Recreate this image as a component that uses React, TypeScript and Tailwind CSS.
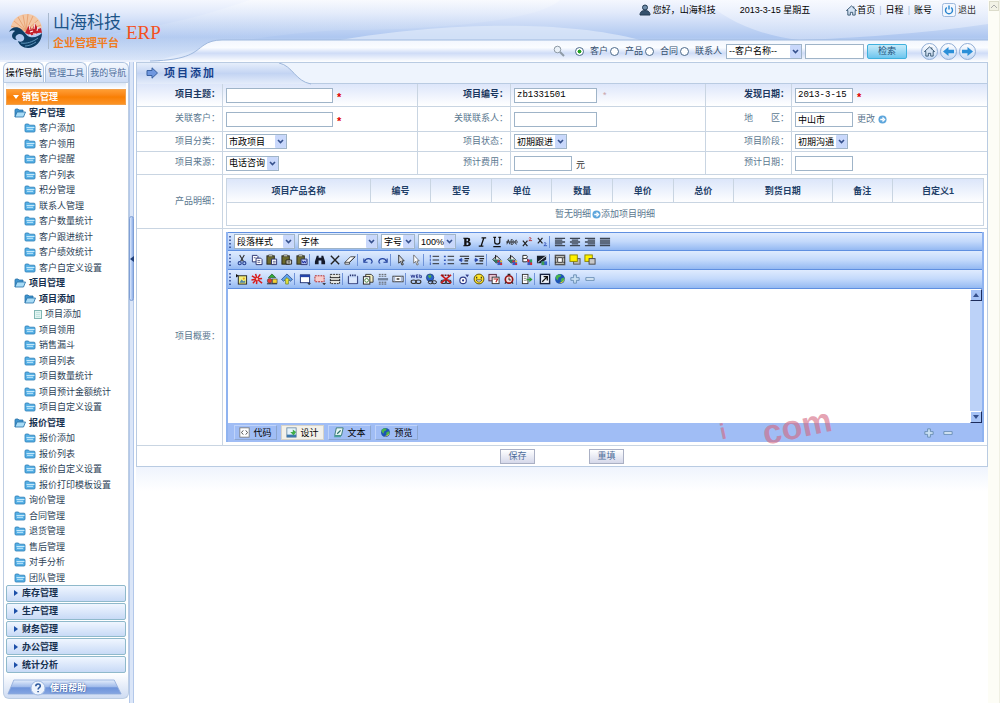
import { useState, type ReactNode } from 'react'

interface TreeNode { text: string; level: number; open?: boolean; leaf?: boolean }

const TREE: TreeNode[] = [
  { text: '客户管理', level: 0, open: true },
  { text: '客户添加', level: 1 },
  { text: '客户领用', level: 1 },
  { text: '客户提醒', level: 1 },
  { text: '客户列表', level: 1 },
  { text: '积分管理', level: 1 },
  { text: '联系人管理', level: 1 },
  { text: '客户数量统计', level: 1 },
  { text: '客户跟进统计', level: 1 },
  { text: '客户绩效统计', level: 1 },
  { text: '客户自定义设置', level: 1 },
  { text: '项目管理', level: 0, open: true },
  { text: '项目添加', level: 1, open: true },
  { text: '项目添加', level: 2, leaf: true },
  { text: '项目领用', level: 1 },
  { text: '销售漏斗', level: 1 },
  { text: '项目列表', level: 1 },
  { text: '项目数量统计', level: 1 },
  { text: '项目预计金额统计', level: 1 },
  { text: '项目自定义设置', level: 1 },
  { text: '报价管理', level: 0, open: true },
  { text: '报价添加', level: 1 },
  { text: '报价列表', level: 1 },
  { text: '报价自定义设置', level: 1 },
  { text: '报价打印模板设置', level: 1 },
  { text: '询价管理', level: 0 },
  { text: '合同管理', level: 0 },
  { text: '退货管理', level: 0 },
  { text: '售后管理', level: 0 },
  { text: '对手分析', level: 0 },
  { text: '团队管理', level: 0 },
]

const INDENT = ['pl-2', 'pl-[18px]', 'pl-7']
const GROUPS = ['库存管理', '生产管理', '财务管理', '办公管理', '统计分析']
const SEARCH_TYPES = ['客户', '产品', '合同', '联系人']

const DETAIL_COLS = [
  { name: '项目产品名称', width: 'w-[19%]' },
  { name: '编号', width: 'w-[8%]' },
  { name: '型号', width: 'w-[8%]' },
  { name: '单位', width: 'w-[8%]' },
  { name: '数量', width: 'w-[8%]' },
  { name: '单价', width: 'w-[8%]' },
  { name: '总价', width: 'w-[8%]' },
  { name: '到货日期', width: 'w-[13%]' },
  { name: '备注', width: 'w-[8%]' },
  { name: '自定义1', width: 'w-[12%]' },
]

/* ---------- toolbar drawings, all on a 13x13 grid ---------- */

const clipboard = (
  <>
    <rect x="1" y="2" width="8" height="9" fill="#6b6a2c" stroke="#26261a" />
    <rect x="3" y="1" width="4" height="2" fill="#d8d8c0" stroke="#333" strokeWidth=".6" />
  </>
)
const bucket = (
  <>
    <path d="M2 6l4-4 4 4-4 4z" fill="#f4f4f4" stroke="#111" />
    <path d="M5 1v5" stroke="#111" />
    <path d="M2 6h7l-3 4z" fill="#2c7a5c" />
    <path d="M7 7h5v5H7z" fill="#3b58c4" />
    <path d="M7 7h2v2H7zM10 10h2v2h-2z" fill="#e02828" />
    <path d="M10 7h2v2h-2z" fill="#f3d22b" />
  </>
)
const chain = (
  <g fill="none" stroke="#333" strokeWidth="1.2">
    <ellipse cx="4" cy="9.5" rx="2.8" ry="1.9" />
    <ellipse cx="9" cy="9.5" rx="2.8" ry="1.9" />
  </g>
)

const ICONS: Record<string, ReactNode> = {
  cut: <><path d="M4 1l4 7M9 1L5 8" stroke="#333" strokeWidth="1.2" /><g fill="none" stroke="#27408f" strokeWidth="1.2"><circle cx="4" cy="10" r="1.7" /><circle cx="9" cy="10" r="1.7" /></g></>,
  copy: <g fill="#fff" stroke="#27306b"><path d="M1.500 1.500h5l1 1v6h-6z" /><path d="M5.500 4.500h5l1.500 1.500v5.500H5.500z" /><path d="M7 7h3M7 9h3M3 4h2" strokeWidth=".8" /></g>,
  paste: <>{clipboard}<path d="M6 5.500h5.500v6H6z" fill="#fff" stroke="#27306b" /><path d="M7.500 8h3M7.500 9.700h3" stroke="#27306b" strokeWidth=".7" /></>,
  pasteText: <>{clipboard}<path d="M5.500 6.500h6v4.500h-6z" fill="#e8e8d8" stroke="#222" /><path d="M7 8h3M7 9.500h3" stroke="#222" strokeWidth=".7" /></>,
  pasteWord: <>{clipboard}<path d="M5.500 5.500h6.500v6H5.500z" fill="#cbd6fb" stroke="#27306b" /><path d="M6.500 7l1.200 3L9 7.500l1 2.500 1.200-3" fill="none" stroke="#1c2fa0" /></>,
  find: <path d="M3 2h2v2h3V2h2l2 6v3H8V7H5v4H1V8z" fill="#151a2b" />,
  close: <path d="M2 2l9 9M11 2l-9 9" stroke="#222" strokeWidth="1.5" />,
  eraser: <path d="M1 9l6-6h5l-6 6v2H1zM1 9h5M6 9l6-6" fill="#fff" stroke="#333" strokeWidth=".9" />,
  undo: <path d="M3 8c1-4 7-4 8 0 0 1-.5 2-1.500 2M2 5v4h4" fill="none" stroke="#1f3f9c" strokeWidth="1.2" />,
  redo: <path d="M10 8c-1-4-7-4-8 0 0 1 .5 2 1.500 2M11 5v4H7" fill="none" stroke="#1f3f9c" strokeWidth="1.2" />,
  select: <path d="M4 1v9l2-2 1.500 4 1.500-.7L7.500 7.500H10z" fill="#ddd" stroke="#222" strokeWidth=".9" />,
  pointer: <path d="M4 1v9l2-2 1.500 4 1.500-.7L7.500 7.500H10z" fill="#fff" stroke="#666" strokeWidth=".9" />,
  ol: <><path d="M5 2.500h7M5 6.500h7M5 10.500h7" stroke="#222" /><path d="M2.500 1v3M2.500 5v3M2.500 9v3" stroke="#2a50b8" /></>,
  ul: <><path d="M5 2.500h7M5 6.500h7M5 10.500h7" stroke="#222" /><path d="M1 2h2v1.500H1zM1 6h2v1.500H1zM1 10h2v1.500H1z" fill="#2a50b8" /></>,
  outdent: <><path d="M2 2.500h10M7 5h5M7 7.500h4M3 10.500h8" stroke="#222" strokeWidth="1.2" /><path d="M1 6.500l3-2v4zM4 6.500h2" fill="#1b3ba5" stroke="#1b3ba5" strokeWidth=".6" /></>,
  indent: <><path d="M2 2.500h10M7 5h5M7 7.500h4M3 10.500h8" stroke="#222" strokeWidth="1.2" /><path d="M5.500 6.500l-3-2v4zM1 6.500h2" fill="#1b3ba5" stroke="#1b3ba5" strokeWidth=".6" /></>,
  fore: bucket,
  back: bucket,
  tableBg: <><path d="M2 1.500h4l1 1.500-1 1.500 1.500 2-1.500 2H2z" fill="#fff" stroke="#222" /><path d="M2 5h4" stroke="#222" /><path d="M7 6h5v6H7z" fill="#3b58c4" /><path d="M7 6h2v3H7zM10 9h2v3h-2z" fill="#e02828" /><path d="M10 6h2v3h-2z" fill="#2fae4e" /></>,
  image: <><path d="M1 2h10v4L5 10H1z" fill="#18202c" /><path d="M11 2L2 9" stroke="#dfe6ee" /><path d="M6 8h6v4H6z" fill="#3a63cf" /><path d="M6 8h3v4H6z" fill="#3b9b55" /></>,
  absolute: <><rect x="1.500" y="1.500" width="10" height="10" fill="#c9c9c0" stroke="#555" strokeWidth="1.500" /><rect x="4" y="4" width="5" height="5" fill="#fff" stroke="#333" /><path d="M1 4h2M10 4h2M1 9h2M10 9h2" stroke="#333" /></>,
  front: <><rect x="5" y="5" width="7" height="6" fill="#b9b9b9" stroke="#555" /><rect x="1" y="1" width="8" height="7" fill="#fff200" stroke="#8b8400" /></>,
  behind: <><rect x="1" y="1" width="8" height="7" fill="#fff200" stroke="#8b8400" /><rect x="5.500" y="5" width="6.500" height="6" fill="#c8c8c8" stroke="#444" /></>,
  picture: <><path d="M0 1l3 2-3 2z" fill="#111" /><rect x="2.500" y="3" width="9" height="9" fill="#f4ef7a" stroke="#222" /><circle cx="8.500" cy="6" r="1.200" fill="#e2a81d" /><path d="M4 10l2-3 2 2 2-1v2.500H4z" fill="#4d84a7" /></>,
  flash: <><g stroke="#d81c1c" strokeWidth="1.600"><path d="M6.500 6.500L1 3M6.500 6.500L5 1M6.500 6.500L10 1.500M6.500 6.500L12 6M6.500 6.500L12 11M6.500 6.500L6 12M6.500 6.500L2 11M6.500 6.500L.5 7.500" /></g><circle cx="6.500" cy="6.500" r="1.300" fill="#f7b4a8" /></>,
  media: <><path d="M6.500 1l4 4h-8z" fill="#31ab37" stroke="#174f1c" strokeWidth=".7" /><circle cx="4" cy="8.500" r="2.600" fill="#e33b2f" stroke="#333" strokeWidth=".6" /><rect x="7" y="6.500" width="5" height="4.500" fill="#f1d034" stroke="#333" strokeWidth=".6" /><path d="M1 11.700h11" stroke="#222" /></>,
  file: <><path d="M6.500 1L12.500 7 10 9 6.500 5.500 3 9 .5 7z" fill="#5fa1e8" stroke="#27468c" strokeWidth=".8" /><path d="M6.500 5l3 3H8v4H5V8H3.500z" fill="#e8e23c" stroke="#5c7820" strokeWidth=".7" /></>,
  table: <><rect x="1.500" y="2" width="10" height="8.500" fill="#fff" stroke="#1e2f70" /><path d="M1 2h11v2.500H1z" fill="#2443a8" /><path d="M9 11h4l-2 2z" fill="#111" /></>,
  cell: <><rect x="1" y="3" width="10" height="6.500" fill="#f6cccc" stroke="#b02222" strokeDasharray="2 1" /><path d="M9 11h4l-2 2z" fill="#111" /></>,
  border: <><rect x="1.500" y="1.500" width="10" height="10" fill="#e6e6e0" stroke="#222" strokeDasharray="2 1" /><path d="M1 5h11M1 8h11" stroke="#222" /></>,
  fieldset: <><path d="M2 3.500H1.500v8h10v-8H11" fill="none" stroke="#26306c" /><path d="M3 2.500h7" stroke="#26306c" strokeWidth="2" strokeDasharray="1.500 1" /><rect x="2.500" y="5" width="8" height="6" fill="#dbe7fb" /></>,
  page: <><path d="M4 1.500h6l2 2V10H4z" fill="#f4f0c4" stroke="#333" /><rect x="1.500" y="4" width="7" height="8" fill="#fff" stroke="#222" /><circle cx="5" cy="8" r="2" fill="none" stroke="#3c7c37" /></>,
  hr: <><path d="M2 1.500h9M2 3.500h9M2 10h9M2 12h9" stroke="#555" strokeDasharray="2 1" /><path d="M1 5.500h11v2.500H1z" fill="#71839c" /></>,
  marquee: <><rect x="1" y="3.500" width="11" height="6" fill="#fff" stroke="#333" /><path d="M1.500 4h2v5h-2zM9.500 4h2v5h-2z" fill="#a9bad8" /><path d="M5 6.500h3" stroke="#222" strokeWidth="1.500" /></>,
  link: <><path d="M1 2l1 3 1.200-3 1.200 3 1-3M7 2v3h2M7 3.500h2M7 2h2M10.500 1.500v3.500h2v-2h-2" fill="none" stroke="#23328a" strokeWidth=".9" />{chain}</>,
  globe: <><circle cx="5.500" cy="5" r="4" fill="#2a62c9" stroke="#12306b" strokeWidth=".7" /><path d="M3 3l3-1 1 2-2 2z" fill="#4fb34a" /><g fill="none" stroke="#222"><ellipse cx="6" cy="10" rx="2.500" ry="1.700" /><ellipse cx="10" cy="10" rx="2.500" ry="1.700" /></g></>,
  unlink: <>{chain}<path d="M1 2l11 9M12 2L1 11" stroke="#c81818" strokeWidth="1.700" /><path d="M2 2.500h9" stroke="#7a1515" strokeWidth="1.500" strokeDasharray="2 1" /></>,
  anchor: <><circle cx="5.500" cy="8" r="3.500" fill="#fff" stroke="#2f3a87" strokeWidth="1.200" /><circle cx="5.500" cy="8" r="1.200" fill="#2f3a87" /><path d="M8 1.500l4 .5-2 2.500z" fill="#2f3a87" /></>,
  smile: <><circle cx="6.500" cy="6.500" r="5.300" fill="#ffe52e" stroke="#5a4d00" /><path d="M4 4v2M9 4v2" stroke="#222" strokeWidth="1.200" /><path d="M3.500 7.500c1 3 5 3 6 0z" fill="#fff" stroke="#222" strokeWidth=".8" /></>,
  date: <><rect x="1" y="1.500" width="8" height="7" fill="#e9c6d3" stroke="#52203a" /><rect x="4.500" y="4.500" width="7.500" height="7" fill="#fff" stroke="#333" /><path d="M6 6.500h4.500L8.500 10" fill="none" stroke="#b01f1f" strokeWidth="1.200" /></>,
  time: <><circle cx="6.500" cy="7" r="4" fill="#f3dede" stroke="#941313" strokeWidth="1.800" /><path d="M6.500 5v2.500h2" fill="none" stroke="#222" /><path d="M5 1.500h3M2 11.500l1.500-1.500M11 11.500L9.500 10" stroke="#222" strokeWidth="1.200" /></>,
  template: <><rect x="1.500" y="1.500" width="6" height="10" fill="#fff" stroke="#333" /><path d="M3 4h3M3 6h3M3 8h3" stroke="#777" strokeWidth=".8" /><path d="M6 6.500h3V4l3.500 3L9 10V7.800H6z" fill="#2f9d35" /></>,
  full: <><rect x="1.500" y="1.500" width="10" height="10" fill="#eef3fb" stroke="#16213d" strokeWidth="1.500" /><path d="M3.500 9.500l5-5M5 4h4v4" fill="none" stroke="#111" strokeWidth="1.400" /></>,
  earth: <><circle cx="6.500" cy="6.500" r="5.300" fill="#1d54b5" /><path d="M3 2.500c2-1.500 4-1 5-.5l-1 2-2 1-1 3-2-2c-.5-1.500 0-2.500 1-3.500zM8 6l3-1c.5 2 0 4-1.500 5L7 9z" fill="#48b44c" /><path d="M5 11c4 1 6-2 7-5-1 2-3 4-7 5z" fill="#f5d33b" /></>,
  plus: <path d="M5 2h3v3h3v3H8v3H5V8H2V5h3z" fill="#c9e0f3" stroke="#5f86ad" strokeWidth=".9" />,
  minus: <path d="M2 5h9v3H2z" fill="#dbeaf7" stroke="#5f86ad" strokeWidth=".9" />,
  bold: <path fillRule="evenodd" d="M2.500 2H7.500Q10.300 2.200 10 4.200 9.800 5.700 8.500 6.200 11 6.600 10.700 9q-.4 2-3.200 2h-5v-1h1V3h-1zM6 3.200v2.500h.8q1-.2 1-1.300T6.800 3.200zM6 7v2.800h.9q1.300-.1 1.300-1.400T6.900 7z" fill="#111" />,
  italic: <path d="M6 2h5M3 11h5M8.500 2l-3 9" stroke="#111" strokeWidth="1.500" />,
  underline: <path d="M2.500 1.500h3M8 1.500h3M4 1.500v5c0 3 5.500 3 5.500 0v-5M2.500 11.500h8" fill="none" stroke="#111" strokeWidth="1.300" />,
  strike: <path d="M1 9l1.500-5L4 9M5.500 4v5h1.800l.7-1.200-.7-1.300.7-1.300L7 4zM12 5c-3-2-3 5 0 3.500M0 6.500h13" fill="none" stroke="#222" strokeWidth=".9" />,
  sup: <><path d="M2 5l5 6M7 5l-5 6" stroke="#222" strokeWidth="1.300" /><path d="M8.500 2.500c1-1.500 3-.5 2 .8L8.500 5H12" fill="none" stroke="#b01f1f" strokeWidth=".9" /></>,
  sub: <><path d="M2 2l5 6M7 2l-5 6" stroke="#222" strokeWidth="1.300" /><path d="M8.500 8c1-1.500 3-.5 2 .8L8.500 10.500H12" fill="none" stroke="#2546b0" strokeWidth=".9" /></>,
  left: <path d="M1 2.500h11M1 4.500h8M1 6.500h11M1 8.500h8M1 10.500h11" stroke="#3d4654" strokeWidth="1.400" />,
  center: <path d="M1 2.500h11M3 4.500h7M1 6.500h11M3 8.500h7M1 10.500h11" stroke="#3d4654" strokeWidth="1.400" />,
  right: <path d="M1 2.500h11M4 4.500h8M1 6.500h11M4 8.500h8M1 10.500h11" stroke="#3d4654" strokeWidth="1.400" />,
  justify: <path d="M1 2.500h11M1 4.500h11M1 6.500h11M1 8.500h11M1 10.500h11" stroke="#3d4654" strokeWidth="1.400" />,
}

// '|' is a separator
const ROW_1 = ['bold', 'italic', 'underline', 'strike', 'sup', 'sub', '|', 'left', 'center', 'right', 'justify']
const ROW_2 = ['cut', 'copy', 'paste', 'pasteText', 'pasteWord', '|', 'find', 'close', 'eraser', '|', 'undo', 'redo', '|', 'select', 'pointer', '|', 'ol', 'ul', 'outdent', 'indent', '|', 'fore', 'back', 'tableBg', 'image', '|', 'absolute', 'front', 'behind']
const ROW_3 = ['picture', 'flash', 'media', 'file', '|', 'table', 'cell', 'border', '|', 'fieldset', 'page', 'hr', 'marquee', '|', 'link', 'globe', 'unlink', '|', 'anchor', 'smile', 'date', 'time', '|', 'template', '|', 'full', 'earth', 'plus', 'minus']

function Tools({ items }: { items: string[] }) {
  return (
    <>
      {items.map((name, i) =>
        name === '|' ? (
          <span key={i} className="h-3 w-[3px] shrink-0 border-l border-[#6f93d8]" />
        ) : (
          <button key={i} type="button" aria-label={name} className="flex w-[15px] shrink-0 justify-center">
            <svg viewBox="0 0 13 13" className="size-3">{ICONS[name]}</svg>
          </button>
        )
      )}
    </>
  )
}

function Grip() {
  return (
    <svg viewBox="0 0 6 12" className="h-3 w-1.5 shrink-0">
      <path d="M2 0v12" stroke="#27408f" strokeWidth="1.500" strokeDasharray="1.500 2" />
    </svg>
  )
}

function Select({ label, value, className }: { label: string; value: string; className: string }) {
  return (
    <span className={`relative inline-block h-[15px] ${className}`}>
      <select
        aria-label={label}
        defaultValue={value}
        className="block size-full appearance-none border border-[#9fb4c8] bg-white pl-0.5 text-[9px] leading-[12px] text-black outline-none"
      >
        <option>{value}</option>
      </select>
      <svg viewBox="0 0 11 13" className="pointer-events-none absolute top-px right-px h-[13px] w-[11px]">
        <rect width="11" height="13" rx="1" fill="#c9d8fb" />
        <path d="M3 5l2.500 2.500L8 5" fill="none" stroke="#35508c" strokeWidth="1.600" />
      </svg>
    </span>
  )
}

function FolderIcon({ open }: { open?: boolean }) {
  return (
    <svg viewBox="0 0 12 10" className="h-[10px] w-3 shrink-0">
      {open ? (
        <>
          <path d="M1 9V2q0-1 1-1h2l1 1h4v2" fill="#3f95cf" stroke="#256fa6" strokeWidth=".8" />
          <path d="M1 9l2-5h8.500L9.500 9z" fill="#a9dcf7" stroke="#256fa6" strokeWidth=".8" />
        </>
      ) : (
        <>
          <path d="M1 8V2q0-1 1-1h2.500l1 1.200H10q1 0 1 1V8q0 1-1 1H2Q1 9 1 8z" fill="#58b1e6" stroke="#2a7cb5" strokeWidth=".8" />
          <path d="M2.500 4.500h8M3 6.300h6" stroke="#c5eafc" strokeWidth="1" />
        </>
      )}
    </svg>
  )
}

function HomeIcon() {
  return (
    <svg viewBox="0 0 12 12" className="size-[11px]">
      <path d="M6 1l5.500 5H10v5H7.300V8H4.700v3H2V6H.5z" fill="#d5e4f5" stroke="#33536f" strokeWidth="1" />
      <path d="M8.500 1.500v2" stroke="#33536f" />
    </svg>
  )
}

function RoundButton({ label, children }: { label: string; children: ReactNode }) {
  return (
    <button type="button" aria-label={label} className="flex size-[17px] items-center justify-center rounded-full border border-[#8fadd6] bg-linear-to-b from-white to-[#c4d9f5]">
      {children}
    </button>
  )
}

function LinkArrow() {
  return (
    <svg viewBox="0 0 10 10" className="size-[9px]">
      <circle cx="5" cy="5" r="4.500" fill="#5ea6dc" />
      <path d="M2.500 5H6M5 2.800L7.300 5 5 7.200" fill="none" stroke="#fff" strokeWidth="1.500" />
    </svg>
  )
}

function Logo() {
  return (
    <svg viewBox="0 0 36 36" className="size-9 shrink-0">
      <path d="M3 15C4 6 11 1 19 1c8 0 14 6 15 14-4-2-8 2-12 4-6 2-14-6-19-4z" fill="#f3c7a4" />
      <g stroke="#e69a68" strokeWidth=".8">
        <path d="M18 18L6 8M18 18L10 4M18 18L15 2M18 18L20 1M18 18L25 3M18 18L30 7M18 18L33 12M18 18L3 13" />
      </g>
      <path d="M17 20l4-8 3 5 3-7 3 6 3-1 1 5c-5-1-8 3-12 2z" fill="#c3202c" />
      <path d="M21 12l1 5M27 10l-1 6M30 14l-1 4" stroke="#fff" strokeWidth=".9" />
      <path d="M1 19c2-5 8-6 12-3 4 3 5 7 9 8 5 1 9-1 12-4 0 8-6 15-14 15-5 0-9-3-10-7 4 2 7-1 6-4-1-3-5-4-7-2-2 1-2 4 0 5-3 0-5-2-5-4 0-3 2-4 3-5-2-1-5 0-6 1z" fill="#0f3f66" />
      <path d="M13 30c5 1 12-1 17-5M17 33c4 0 8-2 11-4" fill="none" stroke="#5c93ba" strokeWidth="1" />
      <path d="M21 22h2M25 21h3M22 19l3-1" stroke="#fff" strokeWidth="1.200" />
    </svg>
  )
}

function Header() {
  const [type, setType] = useState('客户')
  return (
    <header className="relative flex h-[62px] shrink-0">
      <svg viewBox="0 0 988 62" preserveAspectRatio="none" className="absolute inset-0 size-full">
        <defs>
          <linearGradient id="sky" x1="0" y1="0" x2="0" y2="1">
            <stop offset="0" stopColor="#f4f7fe" />
            <stop offset=".2" stopColor="#e2eafb" />
            <stop offset=".6" stopColor="#aec7f0" />
            <stop offset=".75" stopColor="#c6d8f5" />
            <stop offset="1" stopColor="#ecf2fd" />
          </linearGradient>
          <linearGradient id="band" x1="0" y1="0" x2="0" y2="1">
            <stop offset="0" stopColor="#f3f7fe" />
            <stop offset=".35" stopColor="#fafcff" />
            <stop offset=".6" stopColor="#cfdcf7" />
            <stop offset="1" stopColor="#ffffff" />
          </linearGradient>
          <linearGradient id="swoop" x1="0" y1="0" x2="0" y2="1">
            <stop offset="0" stopColor="#ffffff" stopOpacity=".75" />
            <stop offset="1" stopColor="#a4c0ec" stopOpacity=".4" />
          </linearGradient>
          <linearGradient id="arc" x1="0" y1="0" x2="0" y2="1">
            <stop offset="0" stopColor="#f8faff" stopOpacity=".9" />
            <stop offset="1" stopColor="#d6e2f8" stopOpacity=".6" />
          </linearGradient>
        </defs>
        <rect width="988" height="62" fill="url(#sky)" />
        <path d="M0 46C90 40 170 28 250 0H560C540 20 440 30 340 30 270 34 200 46 160 60H0z" fill="url(#swoop)" opacity=".5" />
        <path d="M340 40C430 24 560 18 640 40z" fill="#dfe9fa" opacity=".7" />
        <path d="M705 0C722 18 758 36 800 40 850 38 920 34 988 24V0z" fill="url(#arc)" />
        <path d="M160 61C190 59 194 52 204 45Q211 40 222 40H988V62H160z" fill="url(#band)" />
        <path d="M150 61C190 60 194 52 204 45Q211 40 222 40H988" fill="none" stroke="#9fb9de" />
      </svg>

      <div className="relative flex gap-1 pt-[13px] pl-2">
        <Logo />
        <div className="h-9 border-l border-[#a9b9ce] pr-px pl-1">
          <div className="text-[17px] leading-[20px] text-[#1b5488]">山海科技</div>
          <div className="font-['Noto_Sans_CJK_SC',sans-serif] text-[11px] leading-[19px] font-bold text-[#f07c22]">企业管理平台</div>
        </div>
        <div className="pt-2 font-['Liberation_Serif',serif] text-[19px] leading-[24px] text-[#f4511e]">ERP</div>
      </div>

      <div className="relative flex flex-1 flex-col items-end">
        <div className="flex h-[41px] items-start pr-3 leading-[20px] text-black">
          <svg viewBox="0 0 12 12" className="mt-1 mr-0.5 size-3">
            <circle cx="6" cy="3.500" r="2.500" fill="#6f8daa" stroke="#223a52" />
            <path d="M1 11c0-4 3-4.500 5-4.500S11 7 11 11z" fill="#35526e" stroke="#223a52" />
          </svg>
          <span className="mr-6">您好，山海科技</span>
          <span className="mr-9">2013-3-15 星期五</span>
          <a href="#home" className="flex items-center"><HomeIcon />首页</a>
          <span className="mx-1 text-[#a9bbd6]">|</span>
          <a href="#schedule">日程</a>
          <span className="mx-1 text-[#a9bbd6]">|</span>
          <a href="#account">账号</a>
          <a href="#logout" className="ml-2.5 flex items-center gap-0.5 text-[#333]">
            <svg viewBox="0 0 14 14" className="size-[14px]">
              <rect x=".5" y=".5" width="13" height="13" rx="2" fill="#f1f6fd" stroke="#9db8dc" />
              <path d="M4.800 4.500a3.500 3.500 0 1 0 4.400 0M7 2.500v4" fill="none" stroke="#2a86cf" strokeWidth="1.400" />
            </svg>
            退出
          </a>
        </div>
        <form className="flex h-5 items-center pr-3 text-[#35506f]" onSubmit={(e) => e.preventDefault()}>
          <svg viewBox="0 0 12 12" className="mr-2.5 size-3">
            <circle cx="4.500" cy="4.500" r="3.300" fill="#eaf1f8" stroke="#8e9aa6" />
            <path d="M7 7l4 4" stroke="#8e9aa6" strokeWidth="2" />
          </svg>
          {SEARCH_TYPES.map((t) => (
            <label key={t} className="mr-0.5 flex items-center gap-1.5">
              <input
                type="radio"
                name="searchType"
                checked={type === t}
                onChange={() => setType(t)}
                className="size-[9px] appearance-none rounded-full border border-[#4c6a8c] bg-white checked:bg-[radial-gradient(circle,#21a121_35%,#fff_45%)]"
              />
              {t}
            </label>
          ))}
          <Select label="搜索字段" value="--客户名称--" className="ml-0.5 w-[76px]" />
          <input aria-label="关键字" className="mx-[3px] h-[15px] w-[59px] border border-[#9fb4c8] bg-white px-1 outline-none" />
          <button type="submit" className="h-[15px] w-10 rounded-xs border border-[#3fb0dd] bg-linear-to-b from-[#c5ebfa] to-[#6cc5ee] leading-[12px] text-[#1d4f78]">检索</button>
          <div className="ml-3.5 flex gap-[2px]">
            <RoundButton label="首页"><HomeIcon /></RoundButton>
            <RoundButton label="后退">
              <svg viewBox="0 0 10 10" className="size-[11px]"><path d="M0 5l5-4v2.500h5v3H5V9z" fill="#2b8fd8" /></svg>
            </RoundButton>
            <RoundButton label="前进">
              <svg viewBox="0 0 10 10" className="size-[11px]"><path d="M10 5L5 1v2.500H0v3h5V9z" fill="#2b8fd8" /></svg>
            </RoundButton>
          </div>
        </form>
      </div>
    </header>
  )
}

function Sidebar() {
  const [tab, setTab] = useState('操作导航')
  return (
    <aside className="flex w-[126px] shrink-0 flex-col">
      <div className="flex h-5 gap-px">
        {['操作导航', '管理工具', '我的导航'].map((t) => (
          <button
            key={t}
            type="button"
            onClick={() => setTab(t)}
            className={`flex-1 rounded-t-md border border-b-0 border-[#afc4e0] leading-[18px] whitespace-nowrap ${tab === t ? 'bg-linear-to-b from-white to-[#dfe9f8] text-black' : 'bg-linear-to-b from-[#f4f8fe] to-[#cddcf5] text-[#4d6d9a]'}`}
          >
            {t}
          </button>
        ))}
      </div>
      <nav className="border-x border-t border-[#bccde3] bg-white px-0.5">
        <div className="h-1.5 bg-linear-to-b from-[#dfe9f8] to-white" />
        <button type="button" className="flex h-4 w-full items-center gap-[3px] border border-[#f3a04a] bg-linear-to-b from-[#ff9c30] via-[#f97f02] to-[#fb9222] pl-1.5 font-bold text-white">
          <svg viewBox="0 0 6 4" className="h-1 w-1.5"><path d="M0 0h6L3 4z" fill="#fff" /></svg>
          销售管理
        </button>
        <ul>
          {TREE.map((n, i) => (
            <li key={i} className={`flex odd:h-[15px] even:h-4 ${INDENT[n.level]}`}>
              <a href="#tree" className={`flex items-center gap-[3px] whitespace-nowrap ${n.open ? 'font-bold text-[#16304f]' : 'text-[#2c4257]'}`}>
                {n.leaf ? (
                  <svg viewBox="0 0 8 9" className="h-[9px] w-2"><rect x=".5" y=".5" width="7" height="8" fill="#e2f3f1" stroke="#82b7b3" /><path d="M2 2.500h4M2 4.500h4M2 6.500h4" stroke="#b5dcd8" strokeWidth=".7" /></svg>
                ) : (
                  <FolderIcon open={n.open} />
                )}
                {n.text}
              </a>
            </li>
          ))}
        </ul>
        <div className="flex h-[88px] flex-col gap-px">
          {GROUPS.map((g) => (
            <button key={g} type="button" className="flex flex-1 items-center gap-1 rounded-xs border border-[#8fb9cb] bg-linear-to-b from-[#f0f6ff] to-[#c8daf6] pl-[7px] font-bold text-[#16304f]">
              <svg viewBox="0 0 4 6" className="h-1.5 w-1"><path d="M0 0l4 3-4 3z" fill="#1c4fa8" /></svg>
              {g}
            </button>
          ))}
        </div>
      </nav>
      <a href="#help" className="relative flex h-[26px] items-end rounded-b-md border border-t-0 border-[#bccde3] bg-linear-to-b from-white to-[#cfdcf3]">
        <svg viewBox="0 0 126 25" preserveAspectRatio="none" className="absolute inset-0 size-full">
          <defs>
            <linearGradient id="help" x1="0" y1="0" x2="0" y2="1">
              <stop offset="0" stopColor="#e5eefc" /><stop offset=".5" stopColor="#9db9ea" /><stop offset=".55" stopColor="#6d93da" /><stop offset="1" stopColor="#86a6e2" />
            </linearGradient>
          </defs>
          <path d="M4 21L10 7H112L119 21z" fill="url(#help)" stroke="#8fabdb" strokeWidth=".8" />
        </svg>
        <span className="relative flex items-center gap-1 pb-0.5 pl-[26px] font-bold text-white">
          <svg viewBox="0 0 16 16" className="size-4">
            <circle cx="8" cy="8" r="7" fill="#eef4fd" stroke="#9fb9e2" />
            <path d="M5.800 6.300c0-3 4.500-3 4.500-.3 0 1.700-2.200 1.700-2.200 3.500M8.100 11v1.300" fill="none" stroke="#2f5a9e" strokeWidth="1.600" />
          </svg>
          <span className="[text-shadow:0_0_2px_#1f3f86]">使用帮助</span>
        </span>
      </a>
    </aside>
  )
}

function Label({ children, bold }: { children: ReactNode; bold?: boolean }) {
  return (
    <div className={`flex items-center justify-end border-r border-b border-[#c9d5e2] pr-0.5 pb-0.5 whitespace-pre ${bold ? 'bg-linear-to-b from-[#dde6fa] to-white font-bold text-[#1a3760]' : 'text-[#5b7890]'}`}>
      {children}：
    </div>
  )
}

function Field({ children, tint, last }: { children: ReactNode; tint?: boolean; last?: boolean }) {
  return (
    <div className={`flex items-center border-b border-[#c9d5e2] pl-[3px] ${last ? '' : 'border-r'} ${tint ? 'bg-linear-to-b from-[#dde6fa] to-white' : ''}`}>
      {children}
    </div>
  )
}

function TextBox({ label, value, className }: { label: string; value?: string; className: string }) {
  return (
    <input
      aria-label={label}
      defaultValue={value}
      className={`h-[15px] border border-[#9fb4c8] bg-white px-0.5 font-['Liberation_Mono','Noto_Sans_CJK_SC',monospace] text-black outline-none ${className}`}
    />
  )
}

const Star = () => <span className="ml-1 pt-1 text-[11px] font-bold text-[#e00000]">*</span>

function Editor() {
  const [mode, setMode] = useState('设计')
  const row = 'flex h-[19px] items-center border-b border-[#5f8fe0] bg-linear-to-b from-[#dfebfe] via-[#c3d9fb] to-[#94b9f2]'
  const modes: [string, ReactNode][] = [
    ['代码', <><rect x="1" y="1" width="11" height="11" fill="#fff" stroke="#777" /><path d="M5 4L3 6.500 5 9M8 4l2 2.500L8 9" fill="none" stroke="#333" /></>],
    ['设计', <><rect x="1" y="1" width="11" height="11" fill="#e6f3fb" stroke="#6b8aa5" /><path d="M1 9h11v3H1z" fill="#3c78ad" /><path d="M5 6h3V3l4 3-3 4z" fill="#3fae49" /></>],
    ['文本', <><path d="M4 1h8l-2 9H2z" fill="#e9f8f4" stroke="#2b6f6b" /><path d="M2 10h8l-1 2H1z" fill="#4ba29c" /><path d="M5 8l4-4" stroke="#2b6f6b" strokeWidth="1.500" /></>],
    ['预览', ICONS.earth],
  ]
  return (
    <div className="relative w-full border-x-2 border-[#8fb3f0]">
      <div className={`${row} gap-[3px] border-t`}>
        <div className="flex items-center"><Grip /><Select label="段落样式" value="段落样式" className="w-[61px]" /></div>
        <Select label="字体" value="字体" className="w-20" />
        <Select label="字号" value="字号" className="w-[34px]" />
        <Select label="缩放" value="100%" className="w-[38px]" />
        <div className="flex items-center"><Tools items={ROW_1} /></div>
      </div>
      <div className={row}><Grip /><Tools items={ROW_2} /></div>
      <div className={row}><Grip /><Tools items={ROW_3} /></div>
      <div className="flex h-[134px]">
        <textarea aria-label="项目概要" className="flex-1 resize-none bg-white p-1 outline-none" />
        <div className="flex w-3 flex-col justify-between bg-[#bcd2f8]">
          <button type="button" aria-label="向上" className="flex size-3 items-center justify-center border border-t-white border-r-[#1c2c5c] border-b-[#1c2c5c] border-l-white bg-[#a5c2f5]">
            <svg viewBox="0 0 6 4" className="h-1 w-1.5"><path d="M0 4h6L3 0z" fill="#35508c" /></svg>
          </button>
          <button type="button" aria-label="向下" className="flex size-3 items-center justify-center border border-t-white border-r-[#1c2c5c] border-b-[#1c2c5c] border-l-white bg-[#a5c2f5]">
            <svg viewBox="0 0 6 4" className="h-1 w-1.5"><path d="M0 0h6L3 4z" fill="#35508c" /></svg>
          </button>
        </div>
      </div>
      <div className="flex h-[19px] items-center gap-1 bg-[#a0bdf5] pr-[27px] pl-1.5 text-black">
        {modes.map(([name, icon]) => (
          <button
            key={name}
            type="button"
            onClick={() => setMode(name)}
            className={`flex h-[15px] w-[43px] items-center justify-center gap-[3px] border ${mode === name ? 'border-[#d8d4c8] bg-[#f3f1ea]' : 'border-t-[#bfd3f9] border-r-[#8ca6cf] border-b-[#8ca6cf] border-l-[#bfd3f9]'}`}
          >
            <svg viewBox="0 0 13 13" className="size-[11px]">{icon}</svg>
            {name}
          </button>
        ))}
        <div className="ml-auto flex gap-1"><Tools items={['plus', 'minus']} /></div>
      </div>
      <div className="pointer-events-none absolute right-[150px] -bottom-1 flex items-end gap-9 font-bold text-[#d4667f]/60">
        <span className="-rotate-12 text-[22px] leading-[28px]">i</span>
        <span className="-rotate-12 text-[34px] leading-[40px]">com</span>
      </div>
    </div>
  )
}

function ProjectForm() {
  return (
    <form className="border border-[#b9cbe2] bg-white" onSubmit={(e) => e.preventDefault()}>
      <div className="relative flex h-[21px] items-center border-b border-[#b9cbe2] bg-[#eef4fd]">
        <svg viewBox="0 0 180 22" className="absolute top-0 left-0 h-[22px] w-[180px]">
          <defs>
            <linearGradient id="title" x1="0" y1="0" x2="0" y2="1">
              <stop offset="0" stopColor="#e6eefb" /><stop offset=".5" stopColor="#c3d4f3" /><stop offset="1" stopColor="#e4ecfa" />
            </linearGradient>
          </defs>
          <path d="M0 0H142C156 3 158 18 174 21H0z" fill="url(#title)" />
          <path d="M142 0C156 3 158 18 174 21" fill="none" stroke="#9db6da" />
        </svg>
        <svg viewBox="0 0 12 12" className="relative ml-[9px] size-3">
          <path d="M1 3.500h5V.800L11.500 6 6 11.200V8.500H1z" fill="#6f97df" stroke="#39609f" />
        </svg>
        <h1 className="relative ml-1.5 flex gap-0.5 text-[11px] font-bold text-[#16418c]">
          <span>项</span><span>目</span><span>添</span><span>加</span>
        </h1>
      </div>

      <div className="grid grid-cols-[86px_1fr_93px_1fr_86px_1fr] grid-rows-[23px_25px_20px_23px_54px_217px_20px]">
        <Label bold>项目主题</Label>
        <Field tint><TextBox label="项目主题" className="w-[107px]" /><Star /></Field>
        <Label bold>项目编号</Label>
        <Field tint><TextBox label="项目编号" value="zb1331501" className="w-[83px]" /><span className="ml-1.5 text-[#c9a3a8]">*</span></Field>
        <Label bold>发现日期</Label>
        <Field tint last><TextBox label="发现日期" value="2013-3-15" className="w-[58px]" /><Star /></Field>

        <Label>关联客户</Label>
        <Field><TextBox label="关联客户" className="w-[107px]" /><Star /></Field>
        <Label>关联联系人</Label>
        <Field><TextBox label="关联联系人" className="w-[83px]" /></Field>
        <Label>地　　区</Label>
        <Field last>
          <TextBox label="地区" value="中山市" className="w-[58px]" />
          <a href="#area" className="ml-1 flex items-center gap-[3px] text-[#5b7890]">更改<LinkArrow /></a>
        </Field>

        <Label>项目分类</Label>
        <Field><Select label="项目分类" value="市政项目" className="w-[61px]" /></Field>
        <Label>项目状态</Label>
        <Field><Select label="项目状态" value="初期跟进" className="w-[53px]" /></Field>
        <Label>项目阶段</Label>
        <Field last><Select label="项目阶段" value="初期沟通" className="w-[53px]" /></Field>

        <Label>项目来源</Label>
        <Field><Select label="项目来源" value="电话咨询" className="w-[53px]" /></Field>
        <Label>预计费用</Label>
        <Field><TextBox label="预计费用" className="w-[58px]" /><span className="ml-1 pt-1 text-[#333]">元</span></Field>
        <Label>预计日期</Label>
        <Field last><TextBox label="预计日期" className="w-[58px]" /></Field>

        <Label>产品明细</Label>
        <div className="col-span-5 border-b border-[#c9d5e2] px-[3px] pt-[3px]">
          <table className="w-full table-fixed border-collapse">
            <thead>
              <tr className="h-6 bg-linear-to-b from-[#dce6fa] to-white text-[#1f3f68]">
                {DETAIL_COLS.map((c) => (
                  <th key={c.name} className={`border border-[#c9d5e2] p-0 ${c.width}`}>{c.name}</th>
                ))}
              </tr>
            </thead>
            <tbody>
              <tr className="h-[23px] text-[#5b7890]">
                <td colSpan={10} className="border border-[#c9d5e2] p-0">
                  <div className="flex items-center justify-center gap-px">
                    暂无明细
                    <a href="#add" className="flex items-center"><LinkArrow />添加项目明细</a>
                  </div>
                </td>
              </tr>
            </tbody>
          </table>
        </div>

        <Label>项目概要</Label>
        <div className="col-span-5 flex items-start border-b border-[#c9d5e2] px-[3px] pt-[3px]"><Editor /></div>

        <div className="col-span-6 flex items-center justify-center gap-[54px] text-[#4d6d9a]">
          <button type="submit" className="h-[15px] w-[35px] border border-[#aab0c4] bg-linear-to-b from-white to-[#d5d8ea] leading-[12px]">保存</button>
          <button type="reset" className="h-[15px] w-[35px] border border-[#aab0c4] bg-linear-to-b from-white to-[#d5d8ea] leading-[12px]">重填</button>
        </div>
      </div>
    </form>
  )
}

export default function App() {
  return (
    <div className="flex min-h-screen overflow-hidden bg-white font-['Liberation_Sans','Noto_Sans_CJK_SC',sans-serif] text-[9px] leading-[12px]">
      <div className="flex min-w-0 flex-1 flex-col">
        <Header />
        <div className="flex flex-1 pl-[3px]">
          <Sidebar />
          <div className="relative mr-0.5 w-[5px] shrink-0 border-x border-[#b3c8ea] bg-[#dbe6f8]">
            <button type="button" aria-label="收起" className="absolute top-[154px] -left-px flex h-[85px] w-[5px] items-center rounded-sm border border-[#7f9fd6] bg-linear-to-r from-[#dce8fc] to-[#8fb0e8]">
              <svg viewBox="0 0 4 6" className="h-1.5 w-1 shrink-0"><path d="M4 0L0 3l4 3z" fill="#1f3f7a" /></svg>
            </button>
          </div>
          <main className="min-w-0 flex-1">
            <ProjectForm />
            <div className="h-6 bg-linear-to-b from-[#eff4fd] to-white" />
          </main>
        </div>
      </div>
      <div className="w-3 shrink-0 border-r border-[#f0f0e4] bg-[#fdfdf6]">
        <button type="button" aria-label="滚动到顶部" className="m-px flex size-[10px] items-center justify-center border border-[#dcdccb] bg-[#f2f2e6]">
          <svg viewBox="0 0 6 4" className="h-1 w-1.5"><path d="M0 4l3-3 3 3" fill="none" stroke="#aaa" /></svg>
        </button>
      </div>
    </div>
  )
}
